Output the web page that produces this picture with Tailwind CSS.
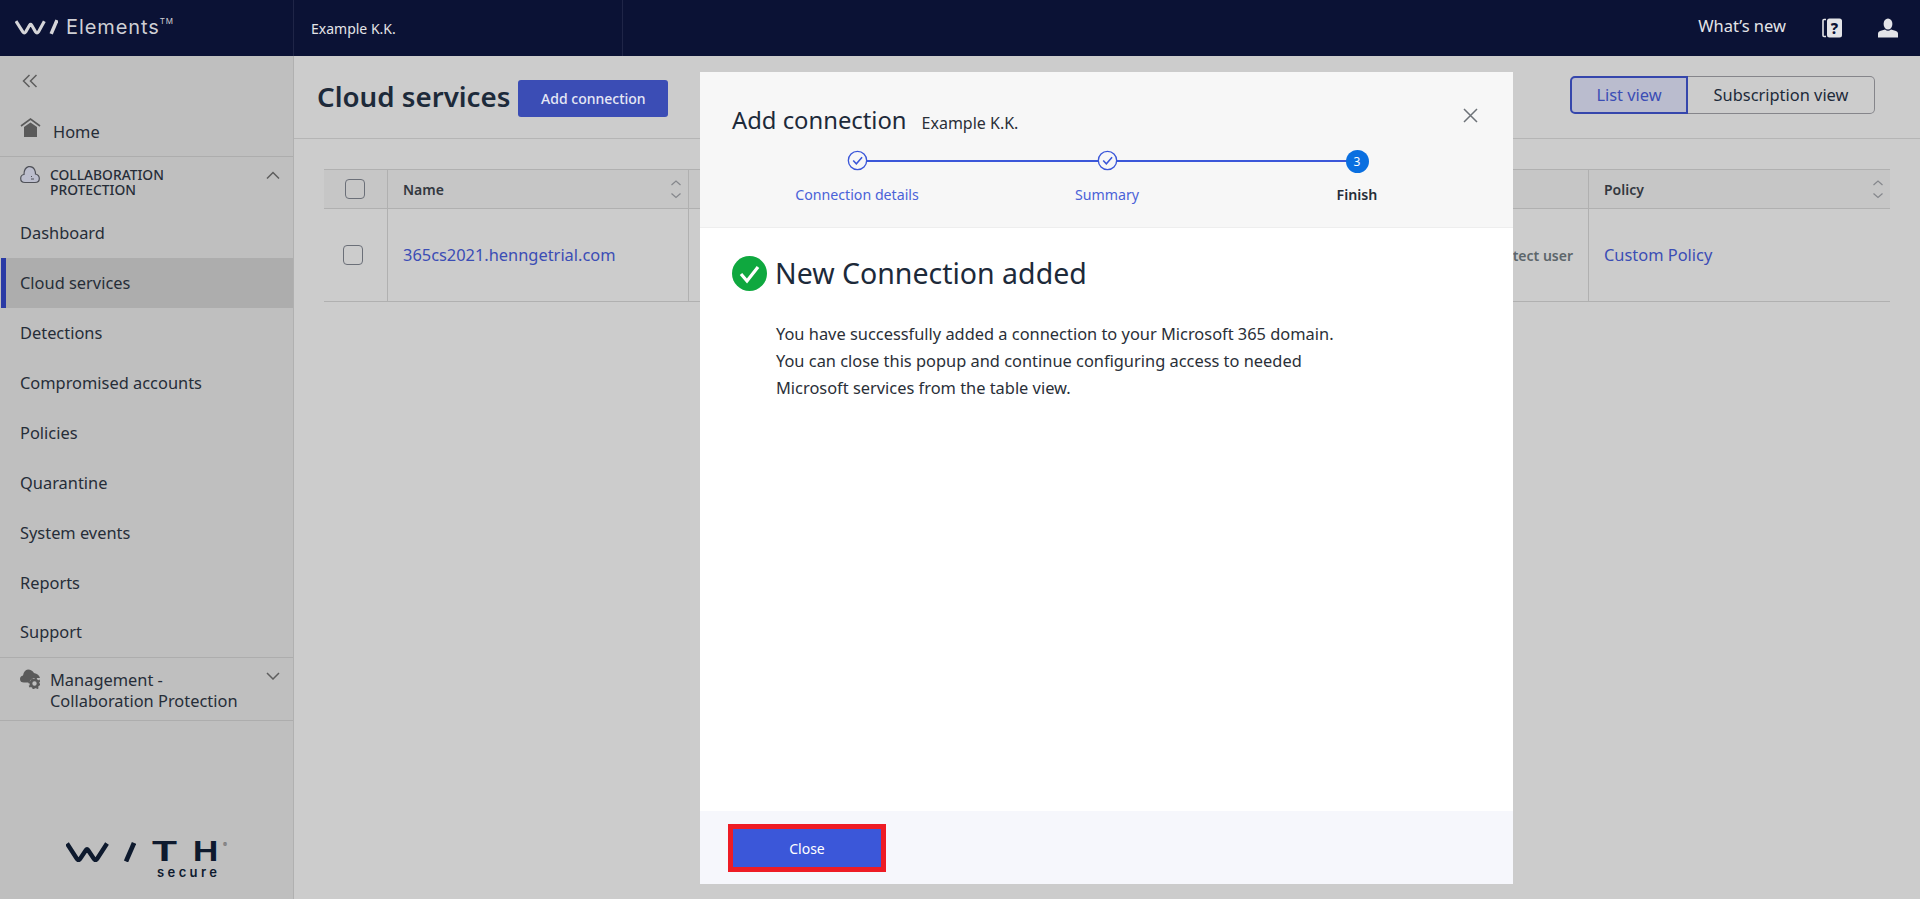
<!DOCTYPE html>
<html lang="en">
<head>
  <meta charset="UTF-8" />
  <title>Cloud services</title>
  <script src="https://cdn.jsdelivr.net/npm/@tailwindcss/browser@4"></script>
</head>
<body class="font-['Noto_Sans',sans-serif] bg-[#cccccc] text-[#1d2a3a] overflow-hidden">
  <div class="relative w-[1920px] h-[899px] flex flex-col">

    <!-- Header -->
    <header class="h-[56px] shrink-0 bg-[#0b1235] flex items-center text-[#e4e4e8]">
      <div class="w-[293px] h-full flex items-center pl-[15px] gap-[8px] pb-[2px]">
        <svg width="43" height="16" viewBox="0 0 44 16" fill="none" stroke="#d5d5d8" stroke-width="3.2">
          <path d="M1 2 L8 13 Q9.5 15 11 13 L15 6 Q16 4.5 17 6 L21 13 Q22.5 15 24 13 L30 2" />
          <path d="M43 1 L37 15" stroke-width="3.6" />
        </svg>
        <span class="font-['Inter',sans-serif] text-[20px] tracking-[0.9px] text-[#cfcfd4] flex items-start">Elements<span class="text-[8px] leading-[12px] mt-[3px]">TM</span></span>
      </div>
      <div class="w-[330px] h-full border-x border-[#1f2547] flex items-center pl-[17px] text-[14px]">Example K.K.</div>
      <div class="ml-auto flex items-center pr-[22px]">
        <span class="text-[16.5px] mr-[36px] mb-[4px]">What’s new</span>
        <svg class="mr-[36px]" width="20" height="20" viewBox="0 0 20 20">
          <path d="M4 1.5 H2 Q1 1.5 1 2.5 V17.5 Q1 18.5 2 18.5 H4" fill="none" stroke="#e4e4e8" stroke-width="1.6" />
          <rect x="5" y="0.5" width="15" height="19" rx="2.5" fill="#e4e4e8" />
          <text x="12.5" y="15.5" text-anchor="middle" font-size="15" font-weight="800" fill="#0b1235" font-family="Noto Sans">?</text>
        </svg>
        <svg width="20" height="20" viewBox="0 0 20 20" fill="#e4e4e8">
          <ellipse cx="10" cy="6" rx="4.4" ry="5.6" />
          <path d="M0 19.5 V15.5 Q0 13.5 2 13 L7 11.5 Q10 14 13 11.5 L18 13 Q20 13.5 20 15.5 V19.5 Z" />
        </svg>
      </div>
    </header>

    <div class="flex flex-1 min-h-0">
      <!-- Sidebar -->
      <aside class="w-[294px] shrink-0 bg-[#bfbfbf] border-r border-[#b0b0b0] flex flex-col text-[16.4px] text-[#262d38]">
        <div class="h-[50px] flex items-center pl-[22px]">
          <svg width="16" height="14" viewBox="0 0 16 14" fill="none" stroke="#5e5e5e" stroke-width="1.5"><path d="M7.5 1 L1.5 7 L7.5 13 M14.5 1 L8.5 7 L14.5 13" /></svg>
        </div>
        <div class="h-[51px] flex items-start pl-[20px] border-b border-[#adadad]">
          <svg class="mt-[11px]" width="21" height="21" viewBox="0 0 21 21">
            <path d="M1 9 L10.5 2 L20 9" fill="none" stroke="#5a5a5a" stroke-width="1.6" />
            <path d="M4 10 L10.5 5.5 L17 10 V20 H4 Z" fill="#5a5a5a" />
          </svg>
          <span class="ml-[12px] mt-[14px] leading-[24px]">Home</span>
        </div>
        <div class="h-[51px] flex items-start pl-[20px] pr-[13px] pt-[8px]">
          <svg class="shrink-0" width="20" height="19" viewBox="0 0 20 19">
            <path d="M5 17.5 Q0.7 17.5 0.7 13.5 Q0.7 10 4 9.5 Q4 3 8.5 1.7 Q12.5 0.8 14.5 4.5 Q15.8 7.5 15.5 9 Q19.3 10 19.3 13.5 Q19.3 17.5 15 17.5 Z" fill="#bcbecd" stroke="#4f5158" stroke-width="1.2" />
            <path d="M11 11.5 H12 M11 14 H14" stroke="#4f5158" stroke-width="1" />
          </svg>
          <span class="ml-[10px] mt-[2px] text-[13.8px] leading-[15px] font-medium uppercase">Collaboration<br>Protection</span>
          <svg class="ml-auto mt-[6px]" width="14" height="8" viewBox="0 0 14 8" fill="none" stroke="#5e5e5e" stroke-width="1.5"><path d="M1 7.5 L7 1.5 L13 7.5" /></svg>
        </div>
        <nav class="flex flex-col">
          <a class="h-[50px] flex items-center pl-[20px]">Dashboard</a>
          <a class="h-[50px] flex items-center pl-[14px] pt-[1px] ml-[1px] border-l-[5px] border-[#2a3aa5] bg-[#adadad]">Cloud services</a>
          <a class="h-[50px] flex items-center pl-[20px] pt-[1px]">Detections</a>
          <a class="h-[50px] flex items-center pl-[20px] pt-[1px]">Compromised accounts</a>
          <a class="h-[50px] flex items-center pl-[20px] pt-[1px]">Policies</a>
          <a class="h-[50px] flex items-center pl-[20px] pt-[1px]">Quarantine</a>
          <a class="h-[50px] flex items-center pl-[20px] pt-[1px]">System events</a>
          <a class="h-[50px] flex items-center pl-[20px] pt-[1px]">Reports</a>
          <a class="h-[49px] flex items-center pl-[20px]">Support</a>
        </nav>
        <div class="h-[64px] border-y border-[#adadad] flex items-start pl-[20px] pr-[13px] pt-[11px]">
          <svg class="shrink-0" width="20" height="20" viewBox="0 0 20 20">
            <path d="M4 13.5 Q0 13.5 0 10 Q0 7 3 6.5 Q4 1 8 0.5 Q12 0.5 14 4 Q19 5 20 9 L12 9 L9 13.5 Z" fill="#5a5a5a" />
            <circle cx="14.5" cy="14.5" r="3.6" fill="none" stroke="#5a5a5a" stroke-width="2.8" />
            <circle cx="14.5" cy="14.5" r="5.4" fill="none" stroke="#5a5a5a" stroke-width="1.6" stroke-dasharray="2 2.2" />
          </svg>
          <span class="ml-[10px] leading-[21px]">Management -<br>Collaboration Protection</span>
          <svg class="ml-auto mt-[3px]" width="14" height="8" viewBox="0 0 14 8" fill="none" stroke="#5e5e5e" stroke-width="1.5"><path d="M1 1 L7 7 L13 1" /></svg>
        </div>
        <!-- Logo -->
        <div class="mt-auto pb-[20px] pl-[66px] text-[#0e1a2e] font-['Inter',sans-serif]">
          <div class="flex items-center h-[20px] relative">
            <svg width="70" height="20" viewBox="0 0 70 20" fill="none" stroke="#0e1a2e" stroke-width="4.4">
              <path d="M1 1.5 L11 17 Q12.5 19 14 17 L20 8 Q21 6.5 22 8 L28 17 Q29.5 19 31 17 L41 1.5" />
              <path d="M68 1 L60 19.5" stroke-width="4.6" />
            </svg>
            <span class="absolute left-[85px] top-[-8px] leading-[36px] text-[27px] font-bold inline-block origin-left scale-x-150">T</span>
            <span class="absolute left-[127px] top-[-8px] leading-[36px] text-[27px] font-bold inline-block origin-left scale-x-125">H</span>
            <span class="absolute left-[157px] top-[0px] leading-[6px] text-[6px] text-[#555]">®</span>
          </div>
          <div class="mt-[3px] pl-[91px] text-[13px] leading-[14px] font-semibold tracking-[3.4px]">secure</div>
        </div>
      </aside>

      <!-- Main -->
      <main class="flex-1 min-w-0 flex flex-col">
        <div class="h-[83px] shrink-0 border-b border-[#b5b5b5] flex items-start pl-[23px] pr-[45px]">
          <h1 class="text-[27.7px] leading-[38px] font-semibold mt-[21px]">Cloud services</h1>
          <button class="ml-[8px] mt-[24px] w-[150px] h-[37px] rounded-[3px] bg-[#3b4db5] text-[#e6e8f5] text-[14px] font-medium">Add connection</button>
          <div class="ml-auto mt-[20px] flex text-[16.4px]">
            <button class="w-[118px] h-[38px] rounded-l-[5px] border-2 border-[#3546ac] bg-[#babcce] text-[#3b4db5]">List view</button>
            <button class="w-[187px] h-[38px] rounded-r-[5px] border border-l-0 border-[#85858a]">Subscription view</button>
          </div>
        </div>

        <div class="ml-[30px] mr-[30px] mt-[30px] text-[14px]">
          <div class="flex h-[40px] border-y border-[#b0b0b0] bg-[#c6c6c6] font-semibold text-[#33383f]">
            <div class="w-[63px] flex items-center pl-[21px]"><span class="block w-[20px] h-[20px] rounded-[4px] border border-[#6b6f78]"></span></div>
            <div class="w-[301px] border-l border-[#b0b0b0] flex items-center pl-[15px] pr-[6px]">
              <span>Name</span>
              <svg class="ml-auto" width="12" height="20" viewBox="0 0 12 20" fill="none" stroke="#85878c" stroke-width="1.2"><path d="M1.5 6 L6 2 L10.5 6 M1.5 14.5 L6 18.5 L10.5 14.5" /></svg>
            </div>
            <div class="w-[900px] border-l border-[#b0b0b0]"></div>
            <div class="flex-1 border-l border-[#b0b0b0] flex items-center pl-[15px] pr-[6px]">
              <span>Policy</span>
              <svg class="ml-auto" width="12" height="20" viewBox="0 0 12 20" fill="none" stroke="#85878c" stroke-width="1.2"><path d="M1.5 6 L6 2 L10.5 6 M1.5 14.5 L6 18.5 L10.5 14.5" /></svg>
            </div>
          </div>
          <div class="flex h-[93px] border-b border-[#b0b0b0] items-stretch">
            <div class="w-[63px] flex items-center pl-[19px]"><span class="block w-[20px] h-[20px] rounded-[4px] border border-[#6b6f78]"></span></div>
            <div class="w-[301px] border-l border-[#b0b0b0] flex items-center pl-[15px] pt-[1px] text-[16.4px] text-[#3b4db5]">365cs2021.henngetrial.com</div>
            <div class="w-[900px] border-l border-[#b0b0b0] flex items-center justify-end pr-[15px] font-semibold text-[#5c666b]">Protect user</div>
            <div class="flex-1 border-l border-[#b0b0b0] flex items-center pl-[15px] pt-[1px] text-[16.4px] text-[#3b4db5]">Custom Policy</div>
          </div>
        </div>
      </main>
    </div>

    <!-- Modal -->
    <div class="absolute left-[700px] top-[72px] w-[813px] h-[812px] bg-white flex flex-col">
      <div class="relative h-[156px] shrink-0 bg-[#f7f7f7] border-b border-[#eeeeee] px-[32px]">
        <div class="flex items-baseline pt-[31px]">
          <span class="text-[23.8px] leading-[34px] text-[#1d2a3a]">Add connection</span>
          <span class="ml-[15px] text-[16px] text-[#2a2f38]">Example K.K.</span>
        </div>
        <svg class="absolute right-[35px] top-[36px]" width="15" height="15" viewBox="0 0 15 15" fill="none" stroke="#6d7278" stroke-width="1.5"><path d="M1 1 L14 14 M14 1 L1 14" /></svg>
        <!-- Stepper -->
        <div class="absolute left-[32px] top-[78px] w-[750px] grid grid-cols-3 text-[14.2px] leading-[20px] text-center">
          <div class="relative flex flex-col items-center text-[#4a62d8]">
            <div class="absolute left-1/2 top-[10px] w-full h-[1.5px] bg-[#3b57d9]"></div>
            <svg class="relative" width="21" height="21" viewBox="0 0 22 22" fill="#f7f7f7" stroke="#3b57d9" stroke-width="1.4">
              <circle cx="11" cy="11" r="9.6" />
              <path d="M6.5 11 L9.8 14.5 L15.8 7.5" fill="none" stroke-width="1.6" />
            </svg>
            <span class="mt-[14px]">Connection details</span>
          </div>
          <div class="relative flex flex-col items-center text-[#4a62d8]">
            <div class="absolute left-1/2 top-[10px] w-full h-[1.5px] bg-[#3b57d9]"></div>
            <svg class="relative" width="21" height="21" viewBox="0 0 22 22" fill="#f7f7f7" stroke="#3b57d9" stroke-width="1.4">
              <circle cx="11" cy="11" r="9.6" />
              <path d="M6.5 11 L9.8 14.5 L15.8 7.5" fill="none" stroke-width="1.6" />
            </svg>
            <span class="mt-[14px]">Summary</span>
          </div>
          <div class="relative flex flex-col items-center font-semibold text-[#262d38]">
            <span class="relative w-[23px] h-[23px] rounded-full bg-[#0a6fe0] text-white text-[12px] font-normal leading-[23px]">3</span>
            <span class="mt-[12px]">Finish</span>
          </div>
        </div>
      </div>

      <div class="flex-1 pl-[32px] pr-[31px] pt-[26px]">
        <div class="flex items-center">
          <svg width="35" height="35" viewBox="0 0 35 35">
            <circle cx="17.5" cy="17.5" r="17.5" fill="#0fa83f" />
            <path d="M9 18 L15 25 L26 11" fill="none" stroke="white" stroke-width="3.2" />
          </svg>
          <h2 class="ml-[8px] text-[28.5px] leading-[38px] text-[#1d2a3a]">New Connection added</h2>
        </div>
        <p class="ml-[44px] mt-[28px] text-[16.4px] leading-[27px] text-[#2a2f38]">You have successfully added a connection to your Microsoft 365 domain.<br>You can close this popup and continue configuring access to needed<br>Microsoft services from the table view.</p>
      </div>

      <div class="h-[73px] shrink-0 bg-[#f6f7fc] pl-[28px] pt-[13px]">
        <button class="w-[158px] h-[48px] border-[5px] border-[#ee1c25] bg-[#3b57d9] text-white text-[14px]">Close</button>
      </div>
    </div>
  </div>
</body>
</html>
